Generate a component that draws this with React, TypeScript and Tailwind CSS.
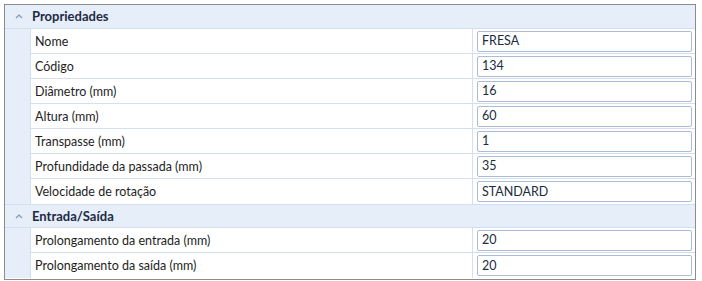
const sections = [
  {
    title: "Propriedades",
    rows: [
      ["Nome", "FRESA"],
      ["Código", "134"],
      ["Diâmetro (mm)", "16"],
      ["Altura (mm)", "60"],
      ["Transpasse (mm)", "1"],
      ["Profundidade da passada (mm)", "35"],
      ["Velocidade de rotação", "STANDARD"],
    ],
  },
  {
    title: "Entrada/Saída",
    rows: [
      ["Prolongamento da entrada (mm)", "20"],
      ["Prolongamento da saída (mm)", "20"],
    ],
  },
];

function Chevron() {
  return (
    <svg width="8" height="5" viewBox="0 0 8 5" className="text-[#7f97ba]">
      <path d="M1 4 L4 1 L7 4" fill="none" stroke="currentColor" strokeWidth="1.2" />
    </svg>
  );
}

export default function App() {
  return (
    <div className="w-[702px] h-[281px] bg-white pt-[4px] pl-[4px] font-['Lato',sans-serif] text-[12.5px]">
      <div className="w-[692px] h-[276px] border border-[#8c8c8c] bg-white overflow-hidden">
        {sections.map((section, si) => (
          <div key={section.title}>
            {/* Category header */}
            <div
              className={`flex items-center h-[24px] bg-[#e6eefa] border-b border-[#d5deec] ${
                si > 0 ? "border-t" : ""
              }`}
            >
              <div className="w-[25px] flex items-center justify-center pl-[2px]">
                <Chevron />
              </div>
              <span className="pl-[2px] pt-[1px] font-bold text-[13px] text-[#1e2a44]">{section.title}</span>
            </div>

            {/* Property rows */}
            {section.rows.map(([label, value], ri) => (
              <div key={label} className="flex h-[25px]">
                <div className="w-[25px] shrink-0 bg-[#e6eefa]" />
                <div
                  className={`flex-1 flex items-center pl-[4px] pt-[2px] text-[#1e1e1e] border-l border-[#d5deec] ${
                    ri < section.rows.length - 1 ? "border-b" : ""
                  }`}
                >
                  {label}
                </div>
                <div
                  className={`w-[223px] shrink-0 flex items-center pl-[4px] pr-[3px] border-l border-[#d5deec] ${
                    ri < section.rows.length - 1 ? "border-b" : ""
                  }`}
                >
                  <div className="w-full h-[21px] flex items-center px-[4px] pt-[1px] border border-[#abbdd6] rounded-[2px] bg-white text-[#1b2b40]">
                    {value}
                  </div>
                </div>
              </div>
            ))}
          </div>
        ))}
      </div>
    </div>
  );
}
